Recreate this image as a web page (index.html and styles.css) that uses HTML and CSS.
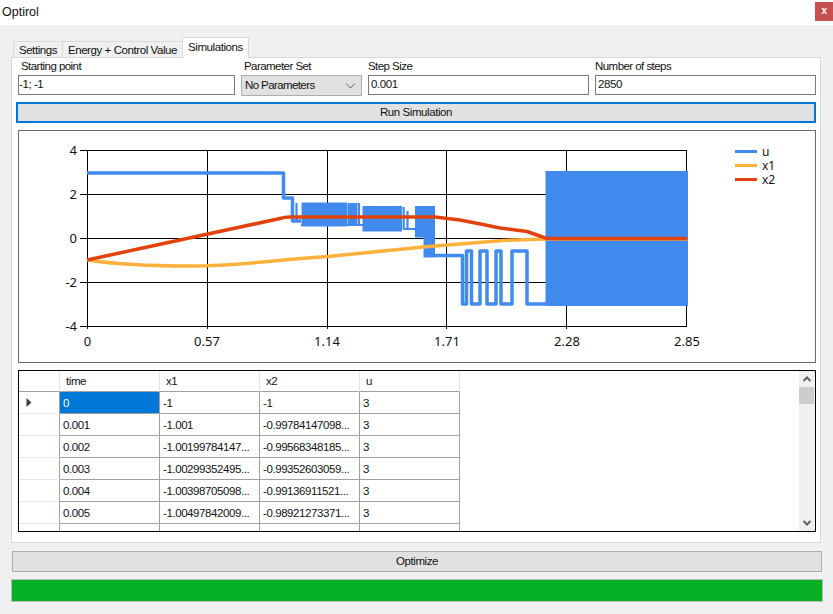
FILE: index.html
```html
<!DOCTYPE html>
<html lang="en">
<head>
<meta charset="utf-8">
<title>Optirol</title>
<link rel="stylesheet" href="styles.css">
</head>
<body>
<div class="window">
  <header class="titlebar">
    <span class="title">Optirol</span>
    <span class="close">x</span>
  </header>
  <div class="tabstrip">
    <span class="tab tab-settings">Settings</span>
    <span class="tab tab-energy">Energy + Control Value</span>
    <span class="tab tab-active">Simulations</span>
  </div>
  <main class="panel">
    <div class="fields">
      <div class="field">
        <span class="label label-indent">Starting point</span>
        <div class="textbox textbox-tight">-1; -1</div>
      </div>
      <div class="field">
        <span class="label label-indent">Parameter Set</span>
        <div class="select">
          <span>No Parameters</span>
          <svg class="select-arrow" width="11" height="6" viewBox="0 0 11 6"><polyline points="1,0.5 5.5,5 10,0.5" fill="none" stroke="#606060" stroke-width="1"/></svg>
        </div>
      </div>
      <div class="field">
        <span class="label">Step Size</span>
        <div class="textbox">0.001</div>
      </div>
      <div class="field">
        <span class="label">Number of steps</span>
        <div class="textbox">2850</div>
      </div>
    </div>
    <div class="button button-focus">Run Simulation</div>
    <div class="chart">
      <svg class="chart-svg" width="796" height="231" viewBox="19 131 796 231">
        <g class="grid">
          <path d="M87.5 150V329M207.5 150V329M327.5 150V329M446.5 150V329M566.5 150V329M686.5 150V326"/>
          <path d="M80 150.5H687M80 194.5H687M80 238.5H687M80 282.5H687M80 326.5H687"/>
        </g>
        <g class="axis-y">
          <text x="77" y="155">4</text>
          <text x="77" y="199">2</text>
          <text x="77" y="243">0</text>
          <text x="77" y="287">-2</text>
          <text x="77" y="331">-4</text>
        </g>
        <g class="axis-x">
          <text x="87.5" y="346">0</text>
          <text x="207" y="346">0.57</text>
          <text x="327" y="346">1.14</text>
          <text x="447" y="346">1.71</text>
          <text x="567" y="346">2.28</text>
          <text x="687" y="346">2.85</text>
        </g>
        <g class="series-u">
          <path class="plot line-u" d="M87 173H283.5V198H292.5V221H301M435 255.500H462.500V304H466.500V251H471.500V304H480V251H487V304H496V251H501V304H512V251H527V304H546"/>
          <path class="line-thin line-u" d="M296.500 203V222M301 225H363M348.500 203V225M350.700 203V225M352.700 203V225M354.500 203V225M356.300 203V225M359 203V225M403.700 207V229M407.500 211V229M403 229H416"/>
          <rect x="301.500" y="202.500" width="45.500" height="24"/>
          <rect x="362.500" y="206" width="39.500" height="25.500"/>
          <rect x="415" y="206" width="20" height="31.500"/>
          <rect x="423.500" y="230" width="11.500" height="27.500"/>
          <rect x="545.500" y="171" width="142.500" height="135"/>
        </g>
        <path class="plot line-x1" d="M87 260C115 264 150 266 190 266C230 266 265 262 300 258.500L328 256.500L423 247L503 240.500L547 239H687"/>
        <path class="plot line-x2" d="M87 260L280 218.500Q284 217 290 217H435L460 220L483 224.500L500 228L527 231.500L547 238.500H687"/>
        <g class="legend">
          <path class="line-u" d="M735 151.500H757"/>
          <path class="line-x1" d="M735 165.500H757"/>
          <path class="line-x2" d="M735 179.500H757"/>
          <text x="762" y="155.500">u</text>
          <text x="762" y="169.500">x1</text>
          <text x="762" y="183.500">x2</text>
        </g>
      </svg>
    </div>
    <div class="grid-view">
      <table class="data">
        <thead>
          <tr><th class="rowhead"></th><th>time</th><th>x1</th><th>x2</th><th>u</th></tr>
        </thead>
        <tbody>
          <tr><td class="rowhead"><svg class="row-marker" width="6" height="9" viewBox="0 0 6 9"><polygon points="0.500,0 5.500,4.500 0.500,9" fill="#404040"/></svg></td><td class="selected">0</td><td>-1</td><td>-1</td><td>3</td></tr>
          <tr><td class="rowhead"></td><td>0.001</td><td>-1.001</td><td>-0.99784147098...</td><td>3</td></tr>
          <tr><td class="rowhead"></td><td>0.002</td><td>-1.00199784147...</td><td>-0.99568348185...</td><td>3</td></tr>
          <tr><td class="rowhead"></td><td>0.003</td><td>-1.00299352495...</td><td>-0.99352603059...</td><td>3</td></tr>
          <tr><td class="rowhead"></td><td>0.004</td><td>-1.00398705098...</td><td>-0.99136911521...</td><td>3</td></tr>
          <tr><td class="rowhead"></td><td>0.005</td><td>-1.00497842009...</td><td>-0.98921273371...</td><td>3</td></tr>
          <tr><td class="rowhead"></td><td>0.006</td><td>-1.00596763280...</td><td>-0.98705688411...</td><td>3</td></tr>
        </tbody>
      </table>
      <div class="scrollbar">
        <svg width="16" height="16" viewBox="0 0 16 16"><polyline points="4.500,10 8,6.500 11.500,10" fill="none" stroke="#606060" stroke-width="2"/></svg>
        <div class="scroll-thumb"></div>
        <svg class="scroll-down" width="16" height="16" viewBox="0 0 16 16"><polyline points="4.500,6 8,9.500 11.500,6" fill="none" stroke="#606060" stroke-width="2"/></svg>
      </div>
    </div>
  </main>
  <div class="button button-optimize">Optimize</div>
  <div class="progress"></div>
</div>
</body>
</html>
```
FILE: styles.css
```css
* { box-sizing: border-box; }
html, body { margin: 0; padding: 0; }
body {
  font-family: "Liberation Sans", Arial, sans-serif;
  font-size: 11.5px;
  letter-spacing: -0.42px;
  color: #111;
  background: #f0f0f0;
  overflow: hidden;
}
.window {
  width: 833px;
  height: 614px;
  display: flex;
  flex-direction: column;
  background: #f0f0f0;
}
.titlebar {
  height: 25px;
  flex: none;
  background: #fff;
  display: flex;
  justify-content: space-between;
  align-items: flex-start;
}
.title { padding: 4px 0 0 2px; line-height: 16px; font-size: 12.5px; letter-spacing: 0; }
.close {
  width: 18px;
  height: 19px;
  margin-top: 2px;
  background: #c75050;
  color: #fff;
  font-weight: 700;
  font-size: 10px;
  line-height: 18px;
  text-align: center;
}
.tabstrip {
  height: 32px;
  flex: none;
  padding-left: 13px;
  display: flex;
  align-items: flex-end;
}
.tab {
  height: 17px;
  margin-bottom: -1px;
  border: 1px solid #d9d9d9;
  border-bottom: 0;
  border-right: 0;
  background: #f0f0f0;
  line-height: 16px;
  text-align: center;
}
.tab-settings { width: 49px; }
.tab-energy { width: 120px; }
.tab-active {
  width: 67px;
  height: 21px;
  border-right: 1px solid #d9d9d9;
  background: #fff;
  position: relative;
  z-index: 1;
  line-height: 18px;
}
.panel {
  width: 810px;
  height: 486px;
  flex: none;
  margin-left: 11px;
  padding: 0 4px;
  background: #fff;
  border: 1px solid #d9d9d9;
}
.fields {
  display: grid;
  grid-template-columns: 217px 121px 221px 221px;
  column-gap: 6px;
  padding-left: 2px;
}
.field { display: flex; flex-direction: column; }
.label { height: 17px; line-height: 17px; white-space: nowrap; letter-spacing: -0.55px; }
.label-indent { padding-left: 3px; }
.textbox {
  height: 20px;
  margin-bottom: 1px;
  border: 1px solid #7a7a7a;
  background: #fff;
  padding-left: 2px;
  line-height: 17px;
}
.textbox-tight { padding-left: 0; }
.select {
  height: 21px;
  border: 1px solid #adadad;
  background: #e1e1e1;
  padding: 0 5px 0 3px;
  line-height: 19px;
  letter-spacing: -0.6px;
  display: flex;
  justify-content: space-between;
  align-items: center;
}
.button {
  height: 21px;
  background: #e1e1e1;
  border: 1px solid #adadad;
  text-align: center;
  line-height: 18px;
}
.button-focus {
  margin-top: 6px;
  border: 2px solid #0078d7;
  line-height: 17px;
}
.chart {
  height: 233px;
  margin: 7px 0 0 2px;
  border: 1px solid #696969;
  background: #fff;
}
.chart-svg { display: block; }
.grid path { stroke: #000; stroke-width: 1; fill: none; shape-rendering: crispEdges; }
.axis-y text, .axis-x text, .legend text {
  font-family: "Noto Sans", "Open Sans", sans-serif;
  font-size: 13px;
  letter-spacing: 0;
  fill: #111;
}
.legend text { font-size: 12px; letter-spacing: -0.2px; }
.axis-y text { text-anchor: end; }
.axis-x text { text-anchor: middle; }
.series-u rect { fill: #428bee; }
.line-u, .line-x1, .line-x2 { fill: none; stroke-width: 3; stroke-linejoin: round; }
.plot { stroke-width: 3.5; }
.line-thin { stroke-width: 2.2; }
.line-u { stroke: #428bee; }
.line-x1 { stroke: #ffb13b; }
.line-x2 { stroke: #e2430c; }
.grid-view {
  height: 162px;
  margin: 7px 0 0 2px;
  border: 1px solid #000;
  background: #fff;
  overflow: hidden;
  display: flex;
  justify-content: space-between;
}
.data {
  border-collapse: separate;
  border-spacing: 0;
  table-layout: fixed;
  width: 441px;
  height: 0;
  align-self: flex-start;
}
.data th, .data td {
  width: 100px;
  padding: 0 0 0 3px;
  font-weight: 400;
  text-align: left;
  white-space: nowrap;
  overflow: hidden;
  border-right: 1px solid #a0a0a0;
  border-bottom: 1px solid #a0a0a0;
}
.data th {
  height: 21px;
  padding-left: 6px;
  border-right-color: #e6e6e6;
}
.data td { height: 22px; }
.data .rowhead {
  width: 41px;
  padding: 0 0 0 7px;
  border-bottom-color: #e6e6e6;
}
.data th.rowhead { border-bottom-color: #a0a0a0; border-right-color: #e6e6e6; }
.data td.rowhead { border-right-color: #a0a0a0; }
.data td.selected { background: #0078d7; color: #fff; }
.row-marker { display: block; }
.scrollbar {
  width: 16px;
  flex: none;
  background: #f0f0f0;
  display: flex;
  flex-direction: column;
}
.scrollbar svg { flex: none; display: block; }
.scroll-thumb { height: 17px; width: 15px; background: #cdcdcd; }
.scroll-down { margin-top: auto; }
.button-optimize {
  width: 810px;
  margin: 8px 0 0 12px;
  flex: none;
}
.progress {
  width: 812px;
  height: 23px;
  margin: 7px 0 0 11px;
  flex: none;
  background: #06b025;
  border: 1px solid #bcbcbc;
}
```
